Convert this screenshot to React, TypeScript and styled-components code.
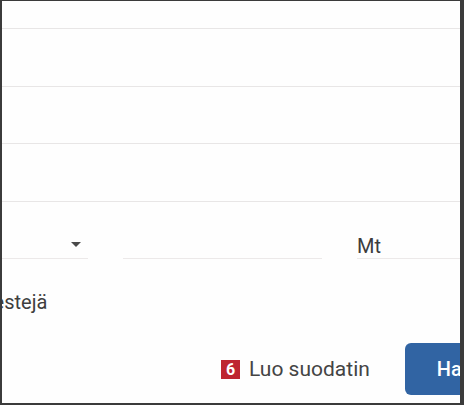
import React from 'react';
import styled, { createGlobalStyle } from 'styled-components';

const Global = createGlobalStyle`
  html, body {
    margin: 0;
    padding: 0;
    background: #ffffff;
  }
  body {
    font-family: Roboto, "Liberation Sans", sans-serif;
  }
`;

const Frame = styled.div`
  width: 464px;
  height: 405px;
  box-sizing: border-box;
  border-style: solid;
  border-color: #3b3b3b;
  border-width: 1px 4px 2px 2px;
  background: #fefefe;
  overflow: hidden;
  display: flex;
  flex-direction: column;
  color: #404040;
`;

const Line = styled.div<{ $h: number }>`
  flex: none;
  height: ${({ $h }) => $h}px;
  box-sizing: border-box;
  border-bottom: 1px solid #e8e6e6;
`;

const SizeRow = styled.div`
  flex: none;
  height: 57px;
  display: flex;
  gap: 35px;
`;

const Field = styled.div<{ $w?: number }>`
  ${({ $w }) => ($w ? `width: ${$w}px; flex: none;` : 'flex: 1;')}
  box-sizing: border-box;
  border-bottom: 1px solid #ece9e9;
  display: flex;
  align-items: flex-end;
  font-size: 20px;
  line-height: 24px;
  color: #3c3c3c;
`;

const SelectField = styled(Field)`
  justify-content: flex-end;
  padding: 0 7px 11px 0;
`;

const Caret = styled.span`
  width: 0;
  height: 0;
  border-left: 5.5px solid transparent;
  border-right: 5.5px solid transparent;
  border-top: 5.5px solid #4a4a4a;
`;

const Option = styled.div`
  flex: none;
  padding-top: 31px;
  margin-left: -23px;
  font-size: 20px;
  line-height: 24px;
  color: #3e3e3e;
  white-space: nowrap;
`;

const Footer = styled.div`
  flex: none;
  height: 52px;
  margin-top: 29px;
  padding-left: 219px;
  display: flex;
  align-items: center;
  white-space: nowrap;
`;

const Badge = styled.span`
  width: 19px;
  height: 19px;
  flex: none;
  background: #be2530;
  color: #fff;
  font-weight: 700;
  font-size: 16px;
  line-height: 19px;
  text-align: center;
  margin-right: 9px;
`;

const LinkText = styled.span`
  font-size: 21px;
  line-height: 24px;
  color: #444;
`;

const Button = styled.button`
  flex: none;
  height: 52px;
  width: 110px;
  margin-left: 35px;
  padding: 0 0 0 32px;
  border: none;
  border-radius: 6px;
  background: #3164a3;
  color: #fff;
  font-family: inherit;
  font-size: 20px;
  font-weight: 500;
  text-align: left;
`;

export default function App() {
  return (
    <>
      <Global />
      <Frame>
        <Line $h={28} />
        <Line $h={58} />
        <Line $h={57} />
        <Line $h={58} />
        <SizeRow>
          <SelectField $w={86}>
            <Caret />
          </SelectField>
          <Field $w={199} />
          <Field>Mt</Field>
        </SizeRow>
        <Option>viestejä</Option>
        <Footer>
          <Badge>6</Badge>
          <LinkText>Luo suodatin</LinkText>
          <Button type="button">Hae</Button>
        </Footer>
      </Frame>
    </>
  );
}
